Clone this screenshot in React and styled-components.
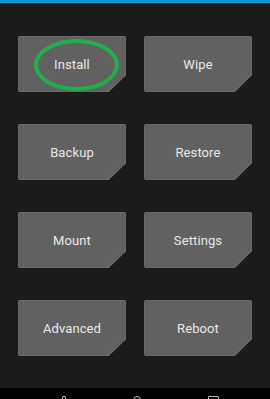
import React from 'react';
import styled, { createGlobalStyle } from 'styled-components';

const Global = createGlobalStyle`
  html, body { margin: 0; padding: 0; background: #1b1b1b; }
  body { font-family: Roboto, "Liberation Sans", sans-serif; }
`;

const Screen = styled.div`
  width: 270px;
  height: 399px;
  display: flex;
  flex-direction: column;
  background: #1b1b1b;
  overflow: hidden;
`;

const TopBar = styled.div`
  height: 3px;
  background: #0f97d6;
  border-bottom: 1px solid #3a1414;
  flex: none;
`;

const Grid = styled.div`
  flex: 1;
  display: grid;
  grid-template-columns: 108px 108px;
  grid-auto-rows: 56px;
  column-gap: 18px;
  row-gap: 32px;
  padding: 32px 18px 0;
  align-content: start;
`;

const Slot = styled.div`
  position: relative;
  display: flex;
`;

const Tile = styled.div`
  flex: 1;
  display: flex;
  padding: 1px;
  background: #6a6a6a;
  clip-path: polygon(0 0, 100% 0, 100% 70%, 84% 100%, 0 100%);
  border-radius: 2px;
`;

const TileFace = styled.div`
  flex: 1;
  background: #616161;
  clip-path: polygon(0 0, 100% 0, 100% 69%, 84% 100%, 0 100%);
  display: flex;
  align-items: center;
  justify-content: center;
  color: #e8e8e8;
  font-size: 13px;
  letter-spacing: 0.1px;
`;

const Circle = styled.div`
  position: absolute;
  left: 16px;
  top: 3px;
  width: 77px;
  height: 44px;
  border: 4px solid #20b04b;
  border-radius: 50%;
  pointer-events: none;
`;

const NavBar = styled.div`
  height: 11px;
  flex: none;
  background: #000;
  display: flex;
  align-items: flex-start;
  gap: 67px;
  padding: 8px 0 0 62px;
  box-sizing: border-box;
  overflow: hidden;
`;

const NavIcon = styled.div`
  flex: none;
  width: ${p => p.$w}px;
  height: 6px;
  border: 1px solid #bdbdbd;
  border-radius: ${p => (p.$round ? '50%' : '1px')};
`;

const items = ['Install', 'Wipe', 'Backup', 'Restore', 'Mount', 'Settings', 'Advanced', 'Reboot'];

export default function App() {
  return (
    <Screen>
      <Global />
      <TopBar />
      <Grid>
        {items.map((label, i) => (
          <Slot key={label}>
            <Tile>
              <TileFace>{label}</TileFace>
            </Tile>
            {i === 0 && <Circle />}
          </Slot>
        ))}
      </Grid>
      <NavBar>
        <NavIcon $w={2} />
        <NavIcon $w={6} $round />
        <NavIcon $w={9} />
      </NavBar>
    </Screen>
  );
}
